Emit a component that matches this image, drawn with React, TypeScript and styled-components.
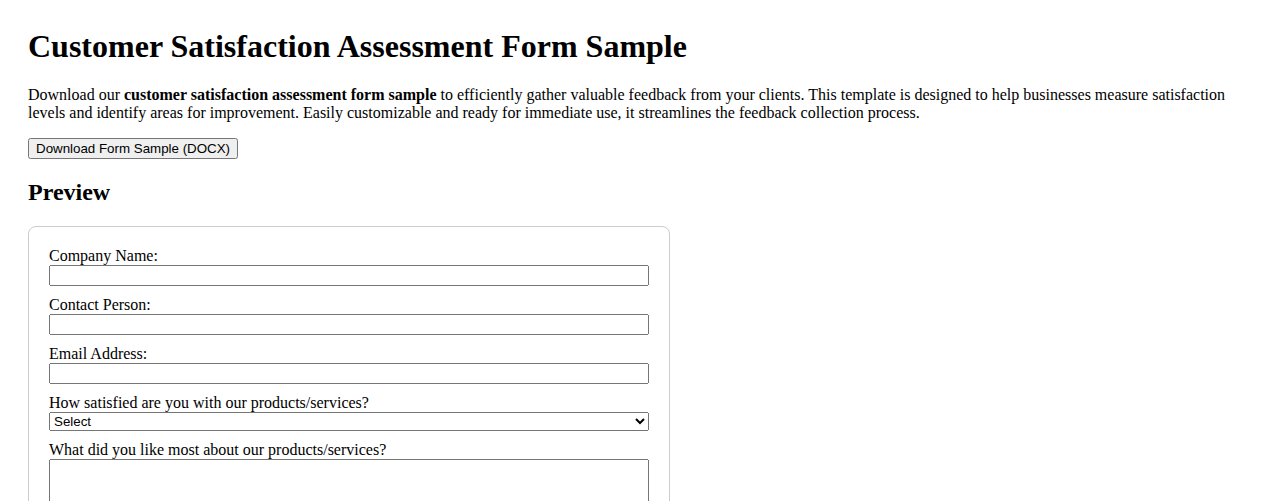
import React from "react";
import styled, { createGlobalStyle } from "styled-components";

const GlobalStyle = createGlobalStyle`
  body {
    margin: 8px;
    background: #ffffff;
    color: #000000;
    font-family: "Liberation Serif", "Times New Roman", serif;
    font-size: 16px;
  }
`;

const Page = styled.main`
  padding: 20px;
`;

const Title = styled.h1`
  font-size: 32px;
  font-weight: bold;
  margin: 0 0 0.67em;
`;

const Intro = styled.p`
  margin: 0 0 16px;
  line-height: normal;
`;

const DownloadButton = styled.button`
  font-family: "Liberation Sans", Arial, sans-serif;
  font-size: 13.333px;
`;

const SectionTitle = styled.h2`
  font-size: 24px;
  font-weight: bold;
  margin: 0.83em 0;
`;

const Card = styled.div`
  max-width: 600px;
  padding: 20px;
  border: 1px solid #cccccc;
  border-radius: 8px;
`;

const Form = styled.form`
  display: flex;
  flex-direction: column;
  gap: 10px;
`;

const Field = styled.div`
  display: flex;
  flex-direction: column;
`;

const Label = styled.label`
  display: block;
  font-size: 16px;
`;

const TextInput = styled.input`
  width: 100%;
  box-sizing: border-box;
  height: 21px;
  font-family: "Liberation Sans", Arial, sans-serif;
  font-size: 13.333px;
`;

const Select = styled.select`
  width: 100%;
  box-sizing: border-box;
  height: 19px;
  font-family: "Liberation Sans", Arial, sans-serif;
  font-size: 13.333px;
`;

const TextArea = styled.textarea`
  width: 100%;
  box-sizing: border-box;
  height: 80px;
  font-family: "Liberation Mono", monospace;
  font-size: 13.333px;
  resize: vertical;
`;

export default function App() {
  return (
    <>
      <GlobalStyle />
      <Page>
        <Title>Customer Satisfaction Assessment Form Sample</Title>
        <Intro>
          Download our <strong>customer satisfaction assessment form sample</strong> to
          efficiently gather valuable feedback from your clients. This template is designed
          to help businesses measure satisfaction levels and identify areas for improvement.
          Easily customizable and ready for immediate use, it streamlines the feedback
          collection process.
        </Intro>
        <DownloadButton type="button">Download Form Sample (DOCX)</DownloadButton>
        <SectionTitle>Preview</SectionTitle>
        <Card>
          <Form onSubmit={(e) => e.preventDefault()}>
            <Field>
              <Label htmlFor="company">Company Name:</Label>
              <TextInput id="company" type="text" />
            </Field>
            <Field>
              <Label htmlFor="contact">Contact Person:</Label>
              <TextInput id="contact" type="text" />
            </Field>
            <Field>
              <Label htmlFor="email">Email Address:</Label>
              <TextInput id="email" type="email" />
            </Field>
            <Field>
              <Label htmlFor="satisfaction">How satisfied are you with our products/services?</Label>
              <Select id="satisfaction" defaultValue="">
                <option value="">Select</option>
                <option value="5">Very Satisfied</option>
                <option value="4">Satisfied</option>
                <option value="3">Neutral</option>
                <option value="2">Dissatisfied</option>
                <option value="1">Very Dissatisfied</option>
              </Select>
            </Field>
            <Field>
              <Label htmlFor="liked">What did you like most about our products/services?</Label>
              <TextArea id="liked" />
            </Field>
            <Field>
              <Label htmlFor="improve">What can we improve?</Label>
              <TextArea id="improve" />
            </Field>
          </Form>
        </Card>
      </Page>
    </>
  );
}
